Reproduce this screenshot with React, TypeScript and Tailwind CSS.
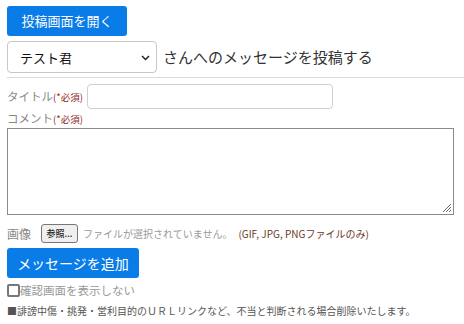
import React from "react";

const font = { fontFamily: '"Noto Sans CJK JP", "Noto Sans", sans-serif' };

function Required() {
  return <span className="text-[9.5px] text-[#8b2a1a]">(*必須)</span>;
}

export default function App() {
  return (
    <div className="w-[464px] h-[324px] bg-white text-[#333] overflow-hidden" style={font}>
      <div className="pl-[7px] pt-[6px]">
        <button className="h-[30px] w-[120px] rounded-[3px] bg-[#0a7ce8] text-[13px] text-white">
          投稿画面を開く
        </button>
      </div>

      <div className="mt-[5px] flex items-center pl-[7px]">
        <div className="relative h-[32px] w-[150px] rounded-[4px] border border-[#c8c8c8] bg-white">
          <span className="absolute left-[12px] top-[6px] text-[13px] text-[#111]">テスト君</span>
          <svg className="absolute right-[6px] top-[13px]" width="9" height="6" viewBox="0 0 9 6">
            <path d="M1 1l3.5 3.5L8 1" fill="none" stroke="#222" strokeWidth="1.5" />
          </svg>
        </div>
        <span className="ml-[6px] text-[15px] text-[#333]">さんへのメッセージを投稿する</span>
      </div>

      <div className="ml-[7px] mt-[4px] h-px bg-[#dcdcdc]" />

      <div className="mt-[6px] flex items-center pl-[7px]">
        <span className="w-[80px] text-[11.5px] text-[#888]">
          タイトル<Required />
        </span>
        <div className="h-[25px] w-[246px] rounded-[4px] border border-[#cfcfcf]" />
      </div>

      <div className="mt-[1px] pl-[7px] text-[11.5px] leading-[16px] text-[#888]">
        コメント<Required />
      </div>

      <div className="relative ml-[7px] mt-[1px] h-[87px] w-[447px] border border-[#8a8a8a]">
        <svg className="absolute bottom-[1px] right-[1px]" width="12" height="12" viewBox="0 0 12 12">
          <path d="M11 3L3 11M11 6L6 11M11 9L9 11" stroke="#666" strokeWidth="1" />
        </svg>
      </div>

      <div className="mt-[9px] flex h-[19px] items-center pl-[7px]">
        <span className="text-[12px] text-[#888]">画像</span>
        <span className="ml-[10px] flex h-[19px] w-[37px] items-center justify-center rounded-[3px] border border-[#777] bg-[#efefef] text-[9px] font-medium text-[#222]">
          参照...
        </span>
        <span className="ml-[5px] text-[10px] text-[#999]">ファイルが選択されていません。</span>
        <span className="ml-[6px] text-[10px] text-[#6b3a1f]">(GIF, JPG, PNGファイルのみ)</span>
      </div>

      <div className="mt-[5px] pl-[7px]">
        <button className="h-[30px] w-[132px] rounded-[3px] bg-[#0a7ce8] text-[14px] text-white">
          メッセージを追加
        </button>
      </div>

      <div className="mt-[5px] flex h-[14px] items-center pl-[7px]">
        <span className="h-[13px] w-[13px] rounded-[2px] border-2 border-[#777] bg-white" />
        <span className="text-[11.5px] leading-[14px] text-[#999]">確認画面を表示しない</span>
      </div>

      <div className="mt-[7px] pl-[7px] text-[10px] leading-[14px] text-[#555]">
        ■誹謗中傷・挑発・営利目的のＵＲＬリンクなど、不当と判断される場合削除いたします。
      </div>
    </div>
  );
}
